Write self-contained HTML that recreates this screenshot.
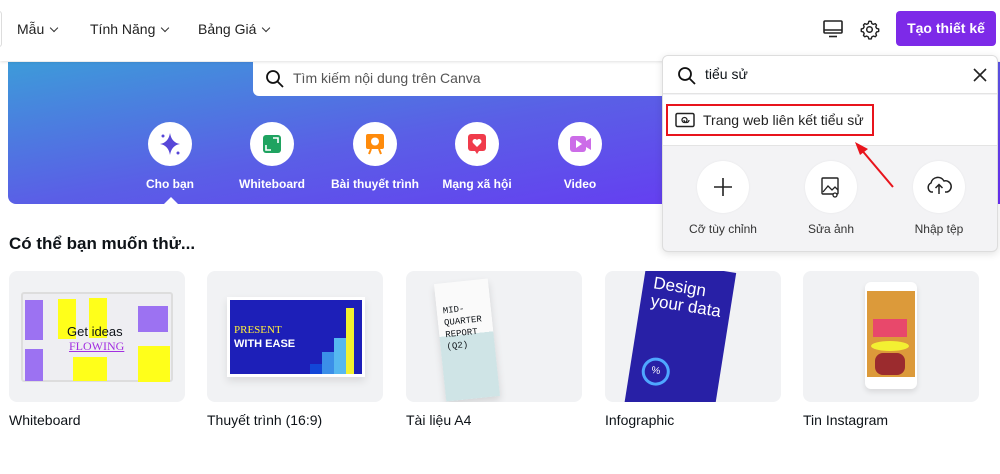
<!DOCTYPE html>
<html><head><meta charset="utf-8"><style>
*{margin:0;padding:0;box-sizing:border-box}
body{width:1000px;height:474px;background:#fff;font-family:"Liberation Sans","Noto Sans CJK SC",sans-serif;color:#0e1318;position:relative;overflow:hidden}
.a{position:absolute}
.hdr{left:0;top:0;width:1000px;height:61px;background:#fff;box-shadow:0 1px 3px rgba(0,0,0,.12);z-index:2}
.nav{top:21px;font-size:14px;color:#222}
.chev{display:inline-block;width:6px;height:6px;border-right:1.3px solid #333;border-bottom:1.3px solid #333;transform:rotate(45deg);margin-left:7px;position:relative;top:-3px}
.banner{left:8px;top:62px;width:1000px;height:142px;border-radius:0 0 0 8px;background:linear-gradient(170deg,#3d9bd9 0%,#5a5fe6 45%,#6a2ef6 100%)}
.srch{left:253px;top:62px;width:420px;height:34px;background:#fff;border-radius:0 0 0 6px;font-size:14px;color:#555;padding:8px 0 0 40px}
.circ{width:44px;height:44px;border-radius:50%;background:#fff;top:122px}
.lbl{top:177px;color:#fff;font-size:12px;font-weight:bold;width:120px;text-align:center}
.card{top:271px;width:176px;height:131px;background:#f1f2f4;border-radius:8px;overflow:hidden}
.ct{top:412px;font-size:14px}
.pop{left:662px;top:55px;width:336px;height:197px;background:#f3f3f5;border:1px solid #ddd;border-radius:6px;box-shadow:0 2px 8px rgba(0,0,0,.12);overflow:hidden;z-index:3}
.pc{width:52px;height:52px;border-radius:50%;background:#fff;top:105px;box-shadow:0 0 2px rgba(0,0,0,.06)}
.pl{top:166px;font-size:12px;color:#333;width:100px;text-align:center}
</style></head><body>
<div class="a hdr">
 <div class="a" style="left:-4px;top:11px;width:6px;height:36px;border:1px solid #ddd;border-radius:4px"></div>
 <div class="a nav" style="left:17px">Mẫu<span class="chev"></span></div>
 <div class="a nav" style="left:90px">Tính Năng<span class="chev"></span></div>
 <div class="a nav" style="left:198px">Bảng Giá<span class="chev"></span></div>
 <svg class="a" style="left:822px;top:19px" width="22" height="20" viewBox="0 0 22 20"><rect x="2" y="2" width="18" height="12" rx="1" fill="none" stroke="#222" stroke-width="1.6"/><line x1="2" y1="11" x2="20" y2="11" stroke="#222" stroke-width="1.4"/><line x1="7" y1="17.5" x2="15" y2="17.5" stroke="#222" stroke-width="1.6"/></svg>
 <svg class="a" style="left:859px;top:19px" width="21" height="21" viewBox="0 0 24 24"><circle cx="12" cy="12" r="3.2" fill="none" stroke="#222" stroke-width="1.7"/><path d="M12 2.5l2 .3.6 2.3 1.8 1 2.2-.8 1.4 1.5-.8 2.2 1 1.8 2.3.6v2.8l-2.3.6-1 1.8.8 2.2-1.4 1.5-2.2-.8-1.8 1-.6 2.3h-2.8l-.6-2.3-1.8-1-2.2.8-1.5-1.5.8-2.2-1-1.8-2.3-.6v-2.8l2.3-.6 1-1.8-.8-2.2 1.5-1.5 2.2.8 1.8-1 .6-2.3z" fill="none" stroke="#222" stroke-width="1.6" stroke-linejoin="round"/></svg>
 <div class="a" style="left:896px;top:11px;width:100px;height:35px;background:#7d2ae8;border-radius:4px;color:#fff;font-weight:bold;font-size:14px;text-align:center;line-height:35px">Tạo thiết kế</div>
</div>
<div class="a banner"></div>
<div class="a" style="left:163px;top:197px;width:0;height:0;border-left:8px solid transparent;border-right:8px solid transparent;border-bottom:8px solid #fff"></div>
<div class="a srch"><svg class="a" style="left:12px;top:7px" width="20" height="20" viewBox="0 0 20 20"><circle cx="8" cy="8" r="6" fill="none" stroke="#111" stroke-width="1.8"/><line x1="12.5" y1="12.5" x2="18" y2="18" stroke="#111" stroke-width="1.8"/></svg>Tìm kiếm nội dung trên Canva</div>
<div class="a circ" style="left:148px"><svg width="44" height="44" viewBox="0 0 44 44"><path d="M22 11c1 6 4 10 10 11-6 1-9 5-10 11-1-6-4-10-10-11 6-1 9-5 10-11z" fill="#5747d8"/><circle cx="15" cy="14" r="1.5" fill="#5747d8"/><circle cx="30" cy="31" r="1.5" fill="#5747d8"/></svg></div>
<div class="a circ" style="left:250px"><svg width="44" height="44" viewBox="0 0 44 44"><rect x="13" y="13" width="18" height="18" rx="3" fill="#1fa360"/><path d="M16 23v5h5M28 21v-5h-5" stroke="#fff" stroke-width="1.6" fill="none"/></svg></div>
<div class="a circ" style="left:353px"><svg width="44" height="44" viewBox="0 0 44 44"><rect x="13" y="12" width="18" height="15" rx="2" fill="#ff8b0b"/><circle cx="22" cy="19.5" r="4" fill="#fff"/><path d="M18 27l-2 5M26 27l2 5" stroke="#ff8b0b" stroke-width="2"/></svg></div>
<div class="a circ" style="left:455px"><svg width="44" height="44" viewBox="0 0 44 44"><rect x="13" y="12" width="18" height="17" rx="3" fill="#f03b4b"/><path d="M20 29l2 3 2-3z" fill="#f03b4b"/><path d="M22 25l-4-4a2.3 2.3 0 0 1 4-3 2.3 2.3 0 0 1 4 3z" fill="#fff"/></svg></div>
<div class="a circ" style="left:558px"><svg width="44" height="44" viewBox="0 0 44 44"><rect x="12" y="14" width="16" height="16" rx="3" fill="#cc6ce8"/><path d="M28 19l5-3v12l-5-3z" fill="#cc6ce8"/><path d="M18 18l6 4-6 4z" fill="#fff"/></svg></div>
<div class="a lbl" style="left:110px">Cho bạn</div>
<div class="a lbl" style="left:212px">Whiteboard</div>
<div class="a lbl" style="left:315px">Bài thuyết trình</div>
<div class="a lbl" style="left:417px">Mạng xã hội</div>
<div class="a lbl" style="left:520px">Video</div>
<div class="a" style="left:9px;top:234px;font-size:17px;font-weight:bold">Có thể bạn muốn thử...</div>

<div class="a card" style="left:9px"><div class="a" style="left:12px;top:21px;width:152px;height:90px;background:#eeeef2;border:2px solid #ddd;border-radius:3px">
<div class="a" style="left:2px;top:6px;width:18px;height:40px;background:#9c72f2"></div><div class="a" style="left:35px;top:5px;width:18px;height:40px;background:#ffff1a"></div><div class="a" style="left:66px;top:4px;width:18px;height:40px;background:#ffff1a"></div><div class="a" style="left:115px;top:12px;width:30px;height:26px;background:#9c72f2"></div><div class="a" style="left:2px;top:55px;width:18px;height:32px;background:#9c72f2"></div><div class="a" style="left:50px;top:63px;width:34px;height:24px;background:#ffff1a"></div><div class="a" style="left:115px;top:52px;width:32px;height:36px;background:#ffff1a"></div>
<div class="a" style="left:44px;top:30px;font-size:13px">Get ideas</div><div class="a" style="left:46px;top:45px;font-size:12px;color:#a22fe0;text-decoration:underline;font-family:'Liberation Serif',serif">FLOWING</div></div></div>
<div class="a card" style="left:207px"><div class="a" style="left:20px;top:26px;width:138px;height:80px;background:#1d1fb8;border:3px solid #fff;box-shadow:0 4px 8px rgba(0,0,0,.1)">
<div class="a" style="left:4px;top:24px;font-size:11px;color:#ffef3a;font-family:'Liberation Serif',serif">PRESENT</div><div class="a" style="left:4px;top:38px;font-size:11px;color:#fff;font-weight:bold">WITH EASE</div>
<div class="a" style="left:80px;top:64px;width:12px;height:10px;background:#1246d8"></div><div class="a" style="left:92px;top:52px;width:12px;height:22px;background:#3b8fe8"></div><div class="a" style="left:104px;top:38px;width:12px;height:36px;background:#56b8f0"></div><div class="a" style="left:116px;top:8px;width:8px;height:66px;background:#f3f130"></div></div></div>
<div class="a card" style="left:406px"><div class="a" style="left:34px;top:10px;width:54px;height:118px;background:linear-gradient(#fafafa 0,#fafafa 45%,#cfe4e6 45%);transform:rotate(-6deg);box-shadow:0 4px 8px rgba(0,0,0,.12);font-size:9px;font-family:'Liberation Mono',monospace;padding:22px 0 0 6px;line-height:12px">MID-<br>QUARTER<br>REPORT<br>(Q2)</div></div>
<div class="a card" style="left:605px"><div class="a" style="left:30px;top:-6px;width:90px;height:150px;background:#2820a6;transform:rotate(9deg);color:#fff;font-size:17px;padding:14px 0 0 10px;line-height:18px">Design<br>your data<div class="a" style="left:12px;top:96px;width:28px;height:28px;border-radius:50%;border:3px solid #4fa7ff;font-size:10px;text-align:center;line-height:22px">%</div></div></div>
<div class="a card" style="left:803px"><div class="a" style="left:62px;top:11px;width:52px;height:107px;background:#fff;border-radius:6px;box-shadow:0 3px 6px rgba(0,0,0,.1)"><div class="a" style="left:2px;top:9px;width:48px;height:86px;background:#dc9a3a"><div class="a" style="left:6px;top:28px;width:34px;height:18px;background:#e8486b"></div><div class="a" style="left:4px;top:50px;width:38px;height:10px;border-radius:50%;background:#f3f032"></div><div class="a" style="left:8px;top:62px;width:30px;height:22px;background:#9b2b2e;border-radius:8px"></div></div></div></div>
<div class="a ct" style="left:9px">Whiteboard</div>
<div class="a ct" style="left:207px">Thuyết trình (16:9)</div>
<div class="a ct" style="left:406px">Tài liệu A4</div>
<div class="a ct" style="left:605px">Infographic</div>
<div class="a ct" style="left:803px">Tin Instagram</div>

<div class="a pop">
 <div class="a" style="left:0;top:0;width:336px;height:38px;background:#fff;border-bottom:1px solid #e4e4e4"></div>
 <svg class="a" style="left:14px;top:10px" width="20" height="20" viewBox="0 0 20 20"><circle cx="8" cy="8" r="6" fill="none" stroke="#111" stroke-width="1.8"/><line x1="12.5" y1="12.5" x2="18" y2="18" stroke="#111" stroke-width="1.8"/></svg>
 <div class="a" style="left:42px;top:10px;font-size:14px">tiểu sử</div>
 <svg class="a" style="left:310px;top:12px" width="14" height="14"><path d="M1 1l12 12M13 1L1 13" stroke="#222" stroke-width="1.6"/></svg>
 <div class="a" style="left:0;top:39px;width:336px;height:51px;background:#fff;border-bottom:1px solid #e4e4e4"></div>
 <div class="a" style="left:3px;top:48px;width:208px;height:32px;border:2px solid #e8141c"></div>
 <svg class="a" style="left:12px;top:56px" width="20" height="16" viewBox="0 0 20 16"><rect x="1" y="1.5" width="18" height="13" rx="1.5" fill="none" stroke="#222" stroke-width="1.5"/><path d="M7 8a2.5 2.5 0 0 1 5 0 2.5 2.5 0 0 1-5 0M9 8a2.5 2.5 0 0 0 5 0" fill="none" stroke="#222" stroke-width="1.3"/></svg>
 <div class="a" style="left:40px;top:56px;font-size:14px;color:#222">Trang web liên kết tiểu sử</div>
 <div class="a pc" style="left:34px"><svg width="52" height="52"><path d="M26 17v18M17 26h18" stroke="#222" stroke-width="1.6"/></svg></div>
 <div class="a pc" style="left:142px"><svg width="52" height="52"><rect x="17" y="17" width="16" height="16" rx="1" fill="none" stroke="#222" stroke-width="1.4"/><path d="M18 31l5-6 4 4 3-3 3 3" fill="none" stroke="#222" stroke-width="1.3"/><circle cx="30" cy="34" r="2" fill="#fff" stroke="#222" stroke-width="1.3"/></svg></div>
 <div class="a pc" style="left:250px"><svg width="52" height="52"><path d="M20 31h-2a5 5 0 0 1 0-9 7 7 0 0 1 13-2 5 5 0 0 1 3 11h-2" fill="none" stroke="#222" stroke-width="1.5"/><path d="M26 33v-9M22.5 27l3.5-3.5 3.5 3.5" fill="none" stroke="#222" stroke-width="1.5"/></svg></div>
 <div class="a pl" style="left:10px">Cỡ tùy chỉnh</div>
 <div class="a pl" style="left:118px">Sửa ảnh</div>
 <div class="a pl" style="left:226px">Nhập tệp</div>
</div>
<svg class="a" style="left:840px;top:135px;z-index:4" width="60" height="60"><line x1="53" y1="52" x2="20" y2="13" stroke="#e8141c" stroke-width="2"/><path d="M15 7l13 7-8 6z" fill="#e8141c"/></svg>
</body></html>
